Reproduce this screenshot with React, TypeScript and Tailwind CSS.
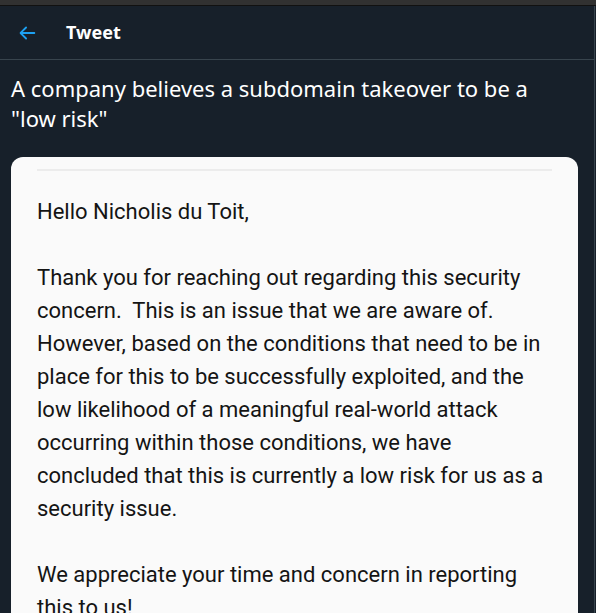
import React from "react";

const lines: string[] = [
  "Hello Nicholis du Toit,",
  "",
  "Thank you for reaching out regarding this security",
  "concern.  This is an issue that we are aware of.",
  "However, based on the conditions that need to be in",
  "place for this to be successfully exploited, and the",
  "low likelihood of a meaningful real-world attack",
  "occurring within those conditions, we have",
  "concluded that this is currently a low risk for us as a",
  "security issue.",
  "",
  "We appreciate your time and concern in reporting",
  "this to us!",
];

export default function App() {
  return (
    <div className="w-[596px] h-[613px] overflow-hidden bg-[#17202a] flex flex-col">
      <div className="h-[6px] shrink-0 bg-[#313131] border-b border-[#111]" />
      <div className="flex flex-1 min-h-0">
        <div className="w-[595px] shrink-0 border-r border-[#38444d] flex flex-col">
          <div className="h-[54px] shrink-0 flex items-center border-b border-[#38444d]">
            <svg viewBox="0 0 24 24" className="w-[22px] h-[22px] ml-[16px] fill-[#1da1f2]">
              <path d="M20 11H7.414l4.293-4.293a1 1 0 0 0-1.414-1.414l-6 6a1 1 0 0 0 0 1.414l6 6a.996.996 0 0 0 1.414 0 1 1 0 0 0 0-1.414L7.414 13H20a1 1 0 1 0 0-2z" />
            </svg>
            <span
              className="ml-[28px] text-[18px] font-bold text-white"
              style={{ fontFamily: '"Noto Sans", sans-serif' }}
            >
              Tweet
            </span>
          </div>
          <div
            className="pt-[13px] px-[11px] text-[22px] leading-[30px] text-white"
            style={{ fontFamily: '"Noto Sans", sans-serif' }}
          >
            A company believes a subdomain takeover to be a<br />"low risk"
          </div>
          <div className="mt-[24px] ml-[11px] w-[567px] flex-1 bg-[#fafafa] rounded-t-[12px] px-[26px] pt-[12px]">
            <div className="h-[2px] bg-[#ececec] w-[515px]" />
            <div
              className="mt-[24px] text-[22px] leading-[33px] text-[#141414] whitespace-pre"
              style={{ fontFamily: 'Roboto, sans-serif' }}
            >
              {lines.map((l, i) => (
                <div key={i} className="h-[33px]">
                  {l}
                </div>
              ))}
            </div>
          </div>
        </div>
      </div>
    </div>
  );
}
